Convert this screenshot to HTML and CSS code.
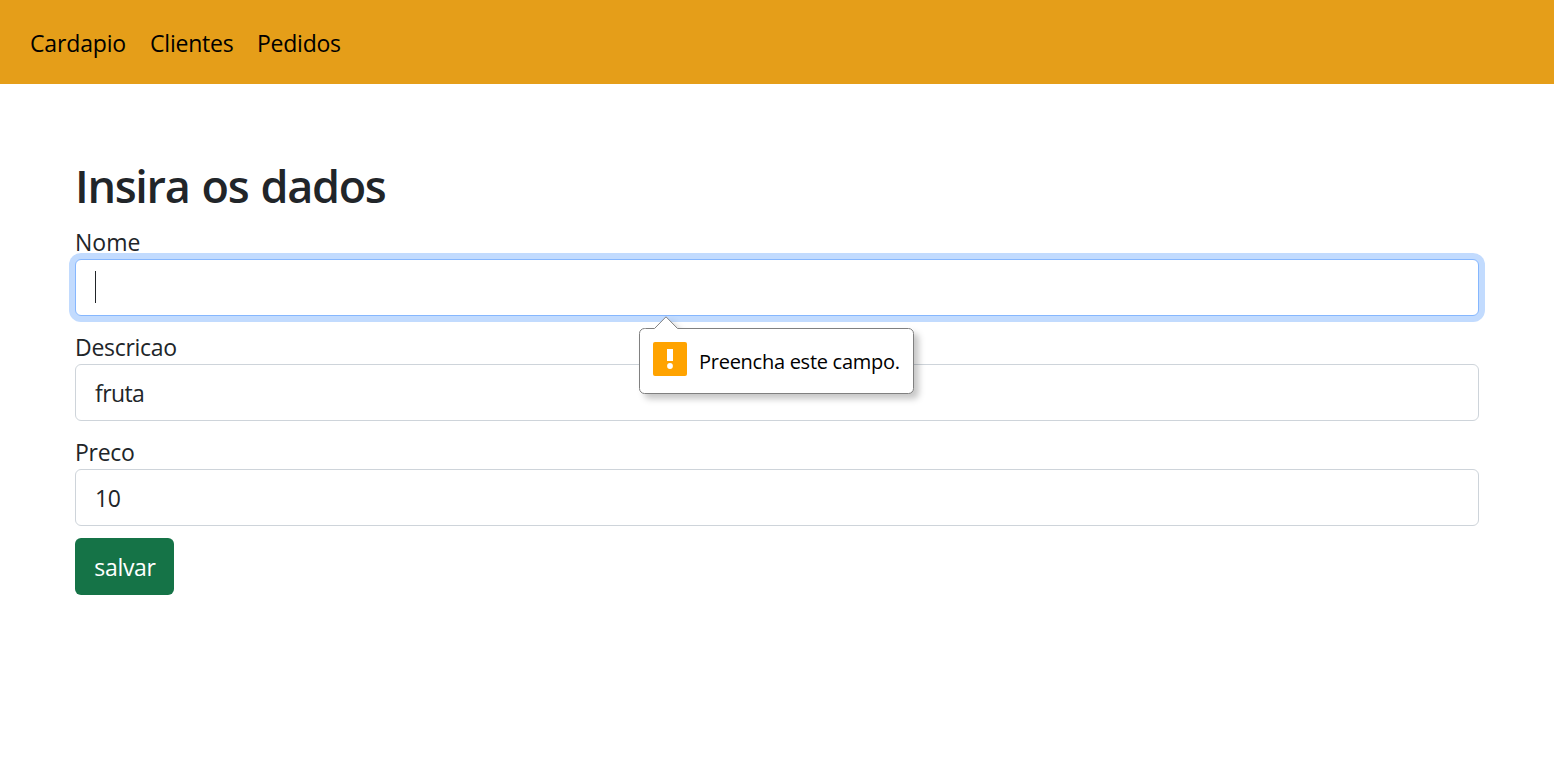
FILE: index.html
```html
<!DOCTYPE html>
<html lang="pt-BR">
<head>
<meta charset="utf-8">
<title>Cardapio</title>
<link rel="stylesheet" href="styles.css">
</head>
<body>
<nav class="navbar">
  <a class="nav-link nav-menu" href="#">Cardapio</a>
  <a class="nav-link nav-clients" href="#">Clientes</a>
  <a class="nav-link nav-orders" href="#">Pedidos</a>
</nav>
<main class="container">
  <h2 class="title">Insira os dados</h2>
  <form class="form">
    <div class="field">
      <label class="label label-name">Nome</label>
      <div class="control focused">
        <span class="caret"></span>
        <div class="tooltip">
          <svg class="bubble" width="290" height="92" viewBox="0 0 290 92">
            <path d="M6.5 12.5H15.500L27 .8L38.500 12.500H269.500A5 5 0 0 1 274.500 17.500V72.500A5 5 0 0 1 269.500 77.500H5.500A5 5 0 0 1 .5 72.500V17.500A5 5 0 0 1 5.500 12.500Z" fill="#fff" stroke="#808080"/>
            <rect x="14" y="26" width="34" height="34" rx="2" fill="#ffa300"/>
            <rect x="28" y="33" width="6" height="12" fill="#fff"/>
            <circle cx="31" cy="50" r="2.900" fill="#fff"/>
          </svg>
          <span class="message">Preencha este campo.</span>
        </div>
      </div>
    </div>
    <div class="field">
      <label class="label label-description">Descricao</label>
      <div class="control"><span class="value-text">fruta</span></div>
    </div>
    <div class="field">
      <label class="label label-price">Preco</label>
      <div class="control"><span class="value-number">10</span></div>
    </div>
    <button class="save" type="button"><span>salvar</span></button>
  </form>
</main>
</body>
</html>
```
FILE: styles.css
```css
* { box-sizing: border-box; }
body {
  margin: 0;
  background: #fff;
  color: #212529;
  font: 23px/36px "Open Sans", "Noto Sans", sans-serif;
}
.navbar {
  display: flex;
  height: 84px;
  padding: 25px 30px 0;
  background: #e59e19;
}
.nav-link { color: #000; text-decoration: none; white-space: nowrap; }
.nav-menu { width: 120px; letter-spacing: -.15px; }
.nav-clients { width: 107px; letter-spacing: -.2px; }
.nav-orders { letter-spacing: -.25px; }
.container { padding: 72px 75px 0; }
.title {
  margin: 0 0 12px;
  font-size: 45px;
  line-height: 59px;
  height: 58px;
  font-weight: 600;
  letter-spacing: -1.3px;
  word-spacing: 1.7px;
  white-space: nowrap;
}
.form { display: flex; flex-direction: column; align-items: stretch; }
.field { height: 105px; }
.label { display: block; height: 33px; line-height: 33px; }
.label-description { letter-spacing: -.3px; }
.label-price { letter-spacing: -.3px; }
.control {
  position: relative;
  height: 57px;
  padding: 10px 19px;
  border: 1px solid #ced4da;
  border-radius: 6px;
  background: #fff;
}
.focused { z-index: 1; border-color: #86b7fe; box-shadow: 0 0 0 6px #c2dbfe; }
.caret { display: block; width: 1px; height: 32px; margin-top: 1px; background: #212529; }
.value-text { letter-spacing: -.6px; }
.value-number { letter-spacing: -.5px; }
.tooltip { position: absolute; left: 563px; top: 56px; width: 290px; height: 92px; }
.bubble { display: block; overflow: visible; filter: drop-shadow(5px 5px 3px rgba(0, 0, 0, .22)); }
.message {
  position: absolute;
  left: 60px;
  top: 31px;
  color: #000;
  font-size: 20px;
  line-height: 30px;
  letter-spacing: -.27px;
  white-space: nowrap;
}
.save {
  width: 99px;
  height: 57px;
  margin-top: -3px;
  padding: 0 0 0 1px;
  border: 0;
  border-radius: 6px;
  background: #157347;
  color: #fff;
  font: inherit;
  letter-spacing: -.3px;
}
```
